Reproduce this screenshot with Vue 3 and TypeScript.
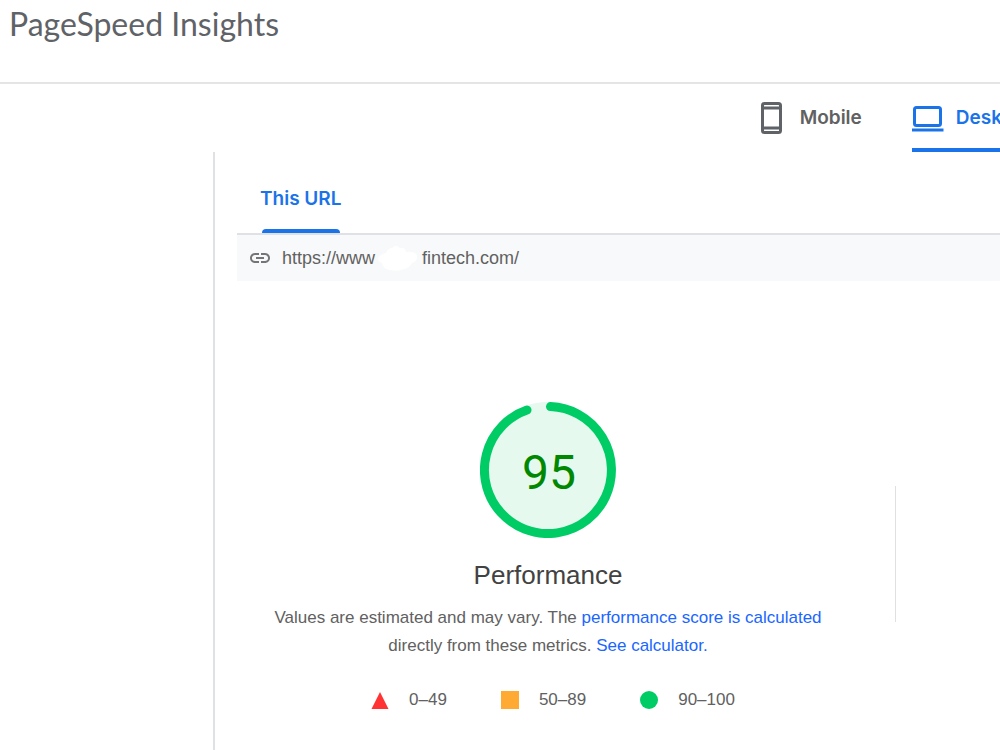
<script setup lang="ts">
import { ref } from 'vue'

type Device = 'mobile' | 'desktop'
const device = ref<Device>('desktop')

const scale = [
  { shape: 'fail', range: '0–49' },
  { shape: 'average', range: '50–89' },
  { shape: 'pass', range: '90–100' },
]
</script>

<template>
  <div class="page">
    <header class="header">
      <h1 class="title">PageSpeed Insights</h1>
    </header>

    <nav class="devices" aria-label="Device">
      <button class="device" :class="{ active: device === 'mobile' }" type="button" @click="device = 'mobile'">
        <svg class="icon phone" viewBox="0 0 32 32" width="32" height="32" aria-hidden="true">
          <rect x="6.5" y="1.5" width="18" height="29" rx="2" />
          <path d="M6.5 6H24.5M6.5 26H24.5" />
        </svg>
        <span>Mobile</span>
      </button>
      <button class="device" :class="{ active: device === 'desktop' }" type="button" @click="device = 'desktop'">
        <svg class="icon" viewBox="0 0 32 32" width="32" height="32" aria-hidden="true">
          <rect x="2.5" y="5.5" width="26" height="18" rx="2" />
          <path d="M0 28H31.5" />
        </svg>
        <span>Desktop</span>
      </button>
    </nav>

    <main class="report">
      <div class="url-tabs">
        <button class="url-tab" type="button">This URL</button>
      </div>
      <div class="url-bar">
        <svg class="link-icon" viewBox="0 0 24 24" width="24" height="24" aria-hidden="true">
          <path d="M3.9 12c0-1.71 1.39-3.1 3.1-3.1h4V7H7c-2.76 0-5 2.24-5 5s2.24 5 5 5h4v-1.9H7c-1.71 0-3.1-1.39-3.1-3.1zM8 13h8v-2H8v2zm9-6h-4v1.9h4c1.71 0 3.1 1.39 3.1 3.1s-1.39 3.1-3.1 3.1h-4V17h4c2.76 0 5-2.24 5-5s-2.24-5-5-5z" />
        </svg>
        <span>https://www</span>
        <svg class="mask" viewBox="0 0 40 28" width="40" height="28" aria-hidden="true">
          <path d="M0 14Q3 10 8 9Q10 4 14 4Q18 0 22 4Q27 3 28 8Q36 7 39 11Q40 17 34 19Q32 24 26 25Q20 28 12 26Q5 25 4 19Q0 18 0 14Z" />
        </svg>
        <span>fintech.com/</span>
      </div>

      <div class="overview">
        <section class="score">
          <svg class="gauge" viewBox="0 0 136 136" width="136" height="136" role="img" aria-label="Performance score 95">
            <circle class="gauge-fill" cx="68" cy="68" r="68" />
            <path class="gauge-arc" d="M70.5 4.6A63.5 63.5 0 1 1 47 8.1" />
            <text class="gauge-value" x="69" y="87" text-anchor="middle">95</text>
          </svg>
          <h2 class="category">Performance</h2>
          <p class="note">
            Values are estimated and may vary. The <a href="#score">performance score is calculated</a><br />
            directly from these metrics. <a href="#calculator">See calculator.</a>
          </p>
          <ul class="scale">
            <li v-for="item in scale" :key="item.shape">
              <svg viewBox="0 0 18 18" width="18" height="18" aria-hidden="true">
                <path v-if="item.shape === 'fail'" fill="#ff3333" d="M9 1L17.5 18H.5Z" />
                <rect v-else-if="item.shape === 'average'" fill="#ffaa33" width="18" height="18" />
                <circle v-else fill="#00cc66" cx="9" cy="9" r="9" />
              </svg>
              <span>{{ item.range }}</span>
            </li>
          </ul>
        </section>
        <div class="divider"></div>
      </div>
    </main>
  </div>
</template>

<style>
body {
  margin: 0;
  background: #fff;
}
</style>

<style scoped>
.page {
  display: flex;
  flex-direction: column;
  min-height: 100vh;
  overflow: hidden;
  color: #616161;
  font-family: "Liberation Sans", Arial, sans-serif;
  font-size: 17px;
}
.header {
  height: 82px;
  padding: 0 9px;
  border-bottom: 2px solid #e4e5e7;
}
.title {
  margin: 0;
  color: #5f6368;
  font: 400 32px/48px Lato, sans-serif;
}
.devices {
  display: flex;
  justify-content: flex-end;
  gap: 50px;
  height: 68px;
  margin-right: -32px;
}
button {
  padding: 0;
  border: 0;
  background: none;
  cursor: pointer;
}
.device {
  display: flex;
  align-items: center;
  gap: 12px;
  padding-top: 4px;
  border-bottom: 4px solid transparent;
  color: #616161;
  font: 600 19px/24px Inter, sans-serif;
}
.device.active {
  border-color: #1a73e8;
  color: #1a73e8;
}
.icon {
  fill: none;
  stroke: currentColor;
  stroke-width: 3;
}
.phone {
  color: #5f6368;
}
.report {
  flex: 1;
  margin-left: 213px;
  padding-left: 22px;
  border-left: 2px solid #dfe1e5;
}
.url-tabs {
  height: 81px;
  padding-left: 23px;
  border-bottom: 2px solid #dfe1e5;
}
.url-tab {
  position: relative;
  height: 81px;
  padding-top: 12px;
  color: #1a73e8;
  font: 600 19px/24px Inter, sans-serif;
}
.url-tab::after {
  position: absolute;
  right: 2px;
  bottom: 0;
  left: 2px;
  height: 4px;
  border-radius: 4px 4px 0 0;
  background: #1a73e8;
  content: "";
}
.url-bar {
  display: flex;
  align-items: center;
  height: 46px;
  padding-left: 11px;
  background: #f8f9fa;
  font-size: 18px;
}
.link-icon {
  margin-right: 10px;
  fill: #757575;
}
.mask {
  margin: 0 4px 0 3px;
  fill: #fff;
}
.overview {
  display: grid;
  grid-template-columns: minmax(0, 1fr) 105px;
  padding-top: 121px;
}
.score {
  display: flex;
  flex-direction: column;
  align-items: center;
  padding-right: 36px;
}
.gauge-fill {
  fill: #e6f9ef;
}
.gauge-arc {
  fill: none;
  stroke: #00cc66;
  stroke-width: 9;
  stroke-linecap: round;
}
.gauge-value {
  fill: #008800;
  font: 400 48px Roboto, sans-serif;
}
.category {
  margin: 21px 0 13px;
  color: #424242;
  font-size: 26px;
  font-weight: 400;
  line-height: 32px;
}
.note {
  margin: 0;
  line-height: 28px;
  text-align: center;
  white-space: nowrap;
}
a {
  color: #1a66ff;
  text-decoration: none;
}
.scale {
  display: flex;
  gap: 54px;
  margin: 30px 0 0;
  padding: 0 0 0 10px;
  line-height: 20px;
  list-style: none;
}
.scale li {
  display: flex;
  align-items: center;
  gap: 20px;
}
.divider {
  height: 136px;
  margin-top: 84px;
  border-left: 1px solid #e0e0e0;
}
</style>
